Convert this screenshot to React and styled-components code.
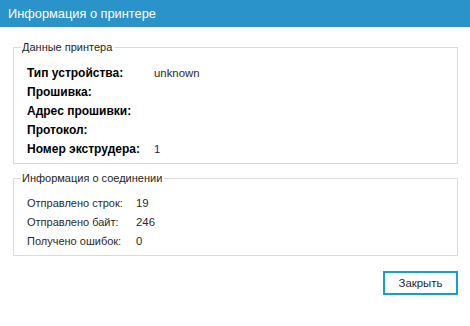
import React from 'react';
import styled, { createGlobalStyle } from 'styled-components';

const GlobalStyle = createGlobalStyle`
  html, body {
    margin: 0;
    padding: 0;
    background: #ffffff;
  }
  body {
    font-family: "Liberation Sans", Arial, sans-serif;
    font-size: 11px;
    color: #1e1e1e;
  }
`;

const Window = styled.div`
  width: 470px;
  height: 326px;
  display: flex;
  flex-direction: column;
  background: #ffffff;
  overflow: hidden;
`;

const TitleBar = styled.div`
  height: 27px;
  display: flex;
  align-items: center;
  padding-left: 8px;
  background: #2a93ca;
  color: #ffffff;
  font-size: 12.8px;
`;

const Body = styled.div`
  display: flex;
  flex-direction: column;
  padding: 13px 12px 0 13px;
`;

const GroupBox = styled.fieldset`
  margin: ${(p) => p.$gap || 0}px 0 0 0;
  padding: ${(p) => p.$padTop}px 12px 5px 13px;
  border: 1px solid #dcdcdc;
  min-width: 0;
`;

const Legend = styled.legend`
  padding: 0 2px 0 1px;
  margin-left: -6px;
  line-height: 14px;
  font-size: 11px;
  color: #1e1e1e;
`;

const Row = styled.div`
  display: flex;
  height: 19px;
  align-items: center;
  white-space: nowrap;
`;

const Label = styled.span`
  flex: 0 0 ${(p) => p.$width}px;
  font-size: ${(p) => (p.$bold ? 12 : 11)}px;
  font-weight: ${(p) => (p.$bold ? 700 : 400)};
  color: ${(p) => (p.$bold ? '#000000' : '#2a2a2a')};
`;

const Value = styled.span`
  font-size: 11.4px;
  color: ${(p) => p.$color || '#2a2a2a'};
`;

const Footer = styled.div`
  display: flex;
  justify-content: flex-end;
  margin-top: 15px;
`;

const CloseButton = styled.button`
  width: 75px;
  height: 24px;
  background: #ffffff;
  border: 2px solid #0fa0d4;
  font-family: inherit;
  font-size: 11.4px;
  color: #1e1e3c;
  padding: 0;
`;

const printerRows = [
  { label: 'Тип устройства:', value: 'unknown' },
  { label: 'Прошивка:', value: '' },
  { label: 'Адрес прошивки:', value: '' },
  { label: 'Протокол:', value: '' },
  { label: 'Номер экструдера:', value: '1', color: '#3a1a5e' },
];

const connectionRows = [
  { label: 'Отправлено строк:', value: '19' },
  { label: 'Отправлено байт:', value: '246' },
  { label: 'Получено ошибок:', value: '0' },
];

export default function App() {
  return (
    <>
      <GlobalStyle />
      <Window>
        <TitleBar>Информация о принтере</TitleBar>
        <Body>
          <GroupBox $padTop={9}>
            <Legend>Данные принтера</Legend>
            {printerRows.map((r) => (
              <Row key={r.label}>
                <Label $bold $width={127}>{r.label}</Label>
                <Value $color={r.color}>{r.value}</Value>
              </Row>
            ))}
          </GroupBox>
          <GroupBox $padTop={8} $gap={7}>
            <Legend>Информация о соединении</Legend>
            {connectionRows.map((r) => (
              <Row key={r.label}>
                <Label $width={109}>{r.label}</Label>
                <Value>{r.value}</Value>
              </Row>
            ))}
          </GroupBox>
          <Footer>
            <CloseButton>Закрыть</CloseButton>
          </Footer>
        </Body>
      </Window>
    </>
  );
}
